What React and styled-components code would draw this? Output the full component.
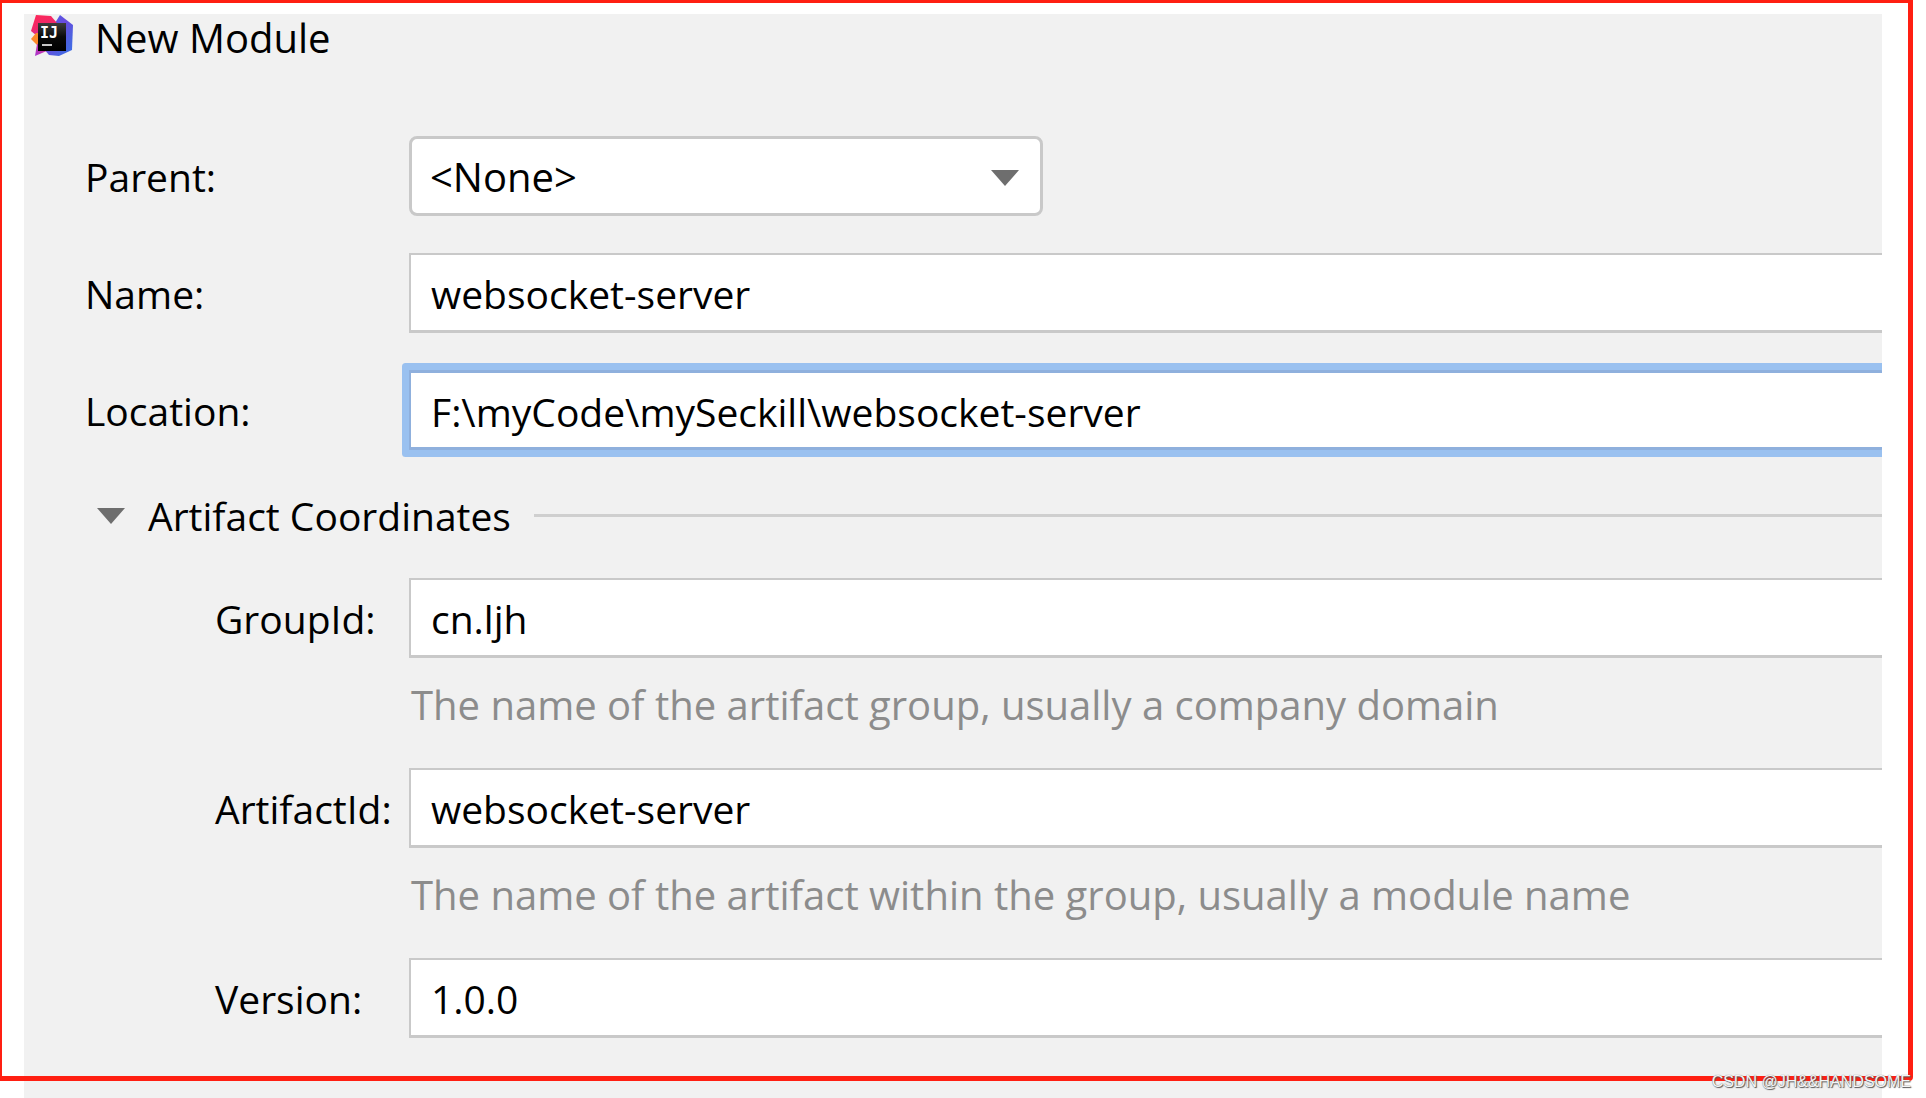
import React, { useState } from 'react'
import styled, { createGlobalStyle, css } from 'styled-components'

const GlobalStyle = createGlobalStyle`
  * {
    box-sizing: border-box;
  }
  body {
    margin: 0;
    background: #fff;
    color: #000;
    font-family: "Open Sans", "Noto Sans", sans-serif;
    font-size: 39px;
    line-height: 54px;
  }
`;

function Logo() {
  return (
    <svg width="42" height="42" viewBox="0 0 42 42" aria-hidden="true">
      <defs>
        <linearGradient id="pink" x1="0" y1="0" x2="0.4" y2="1">
          <stop offset="0" stopColor="#fe2857" />
          <stop offset="0.6" stopColor="#f0276a" />
          <stop offset="1" stopColor="#c22fb0" />
        </linearGradient>
        <linearGradient id="blue" x1="0" y1="0" x2="1" y2="1">
          <stop offset="0" stopColor="#3b70e8" />
          <stop offset="0.45" stopColor="#6b4ade" />
          <stop offset="0.75" stopColor="#4a63e0" />
          <stop offset="1" stopColor="#3a72ea" />
        </linearGradient>
        <linearGradient id="purple" x1="0" y1="1" x2="1" y2="0">
          <stop offset="0" stopColor="#a737d0" />
          <stop offset="1" stopColor="#e0307e" />
        </linearGradient>
        <linearGradient id="black" x1="0" y1="0" x2="0" y2="1">
          <stop offset="0" stopColor="#3c3c3c" />
          <stop offset="0.5" stopColor="#0a0a0a" />
          <stop offset="1" stopColor="#000" />
        </linearGradient>
      </defs>
      <path d="M29 0 42 10 41 35 28 41 18 40 12 33 24 8Z" fill="url(#blue)" />
      <path d="M5 0 20 1 26 8 14 22 6 21 0 16Z" fill="url(#pink)" />
      <path d="M5 18 0 24 6 30 14 28V18Z" fill="#fc8a2a" />
      <path d="M6 29 4 41 18 35 16 26Z" fill="url(#purple)" />
      <rect x="7" y="8" width="28" height="28" fill="url(#black)" />
      <text x="9" y="23" fill="#fff" fontFamily="DejaVu Sans Mono, monospace" fontWeight="700" fontSize="15">IJ</text>
      <rect x="11" y="29" width="10" height="2" fill="#c8c8c8" />
    </svg>
  )
}

function Triangle() {
  return (
    <svg width="28" height="16" viewBox="0 0 28 16" aria-hidden="true">
      <path d="M0 0H28L14 16Z" fill="#6e6e6e" />
    </svg>
  )
}

export default function App() {
  const [open, setOpen] = useState(true)
  const [values, setValues] = useState({
    name: 'websocket-server',
    location: 'F:\\myCode\\mySeckill\\websocket-server',
    groupId: 'cn.ljh',
    artifactId: 'websocket-server',
    version: '1.0.0',
  })

  const bind = (key) => ({
    id: key,
    value: values[key],
    spellCheck: false,
    onChange: (e) => setValues({ ...values, [key]: e.target.value }),
  })

  return (
    <Page>
      <GlobalStyle />
      <Dialog>
        <TitleBar>
          <Logo />
          <Title>New Module</Title>
        </TitleBar>
        <Form>
          <Row>
            <Label htmlFor="parent">Parent:</Label>
            <SelectBox>
              <Select id="parent">
                <option>&lt;None&gt;</option>
              </Select>
              <Arrow><Triangle /></Arrow>
            </SelectBox>
          </Row>
          <Row>
            <Label htmlFor="name">Name:</Label>
            <Input {...bind('name')} />
          </Row>
          <Row>
            <Label htmlFor="location">Location:</Label>
            <Input $active {...bind('location')} />
          </Row>
          <Section type="button" aria-expanded={open} onClick={() => setOpen(!open)}>
            <Triangle />
            Artifact Coordinates
            <Line />
          </Section>
          {open && <>
            <Row>
              <Label $nested htmlFor="groupId">GroupId:</Label>
              <Input {...bind('groupId')} />
              <Hint>The name of the artifact group, usually a company domain</Hint>
            </Row>
            <Row>
              <Label $nested htmlFor="artifactId">ArtifactId:</Label>
              <Input {...bind('artifactId')} />
              <Hint>The name of the artifact within the group, usually a module name</Hint>
            </Row>
            <Row>
              <Label $nested htmlFor="version">Version:</Label>
              <Input {...bind('version')} />
            </Row>
          </>}
        </Form>
      </Dialog>
      <Frame />
      <Watermark>CSDN @JH&amp;&amp;HANDSOME</Watermark>
    </Page>
  )
}

const Page = styled.div`
  position: relative;
  display: flex;
  min-height: 100vh;
  padding: 14px 44px 0 24px;
`;

const Dialog = styled.main`
  flex: 1;
  min-width: 0;
  overflow-x: clip;
  background: #f1f1f1;
`;

const TitleBar = styled.header`
  display: flex;
  gap: 22px;
  padding: 1px 0 0 7px;
`;

const Title = styled.h1`
  margin: 0;
  font-size: 40px;
  font-weight: 400;
  line-height: 45px;
`;

const Form = styled.form`
  display: flex;
  flex-direction: column;
  gap: 37px;
  padding: 76px 0 40px 61px;
`;

const Row = styled.div`
  display: grid;
  grid-template-columns: 324px 1fr;
  align-items: center;
  row-gap: 21px;
`;

const Label = styled.label`
  white-space: nowrap;
  padding-top: 2px;
  padding-left: ${(props) => (props.$nested ? '130px' : '0')};
`;

const control = css`
  width: 100%;
  height: 80px;
  padding: 2px 20px 0;
  border: 3px solid #c9c9c9;
  background: #fff;
  color: inherit;
  font: inherit;
  outline: none;
`;

const Input = styled.input`
  ${control}
  border-width: 2px 0 3px 2px;
  ${(props) => props.$active && css`
    border-color: #8fb0dd;
    border-width: 3px 0 3px 2px;
    box-shadow: 0 0 0 7px #9ac1f0;
    border-radius: 1px;
  `}
`;

const SelectBox = styled.div`
  position: relative;
  max-width: 634px;
`;

const Select = styled.select`
  ${control}
  display: block;
  appearance: none;
  padding-left: 18px;
  border-radius: 8px;
  font-size: 40px;
`;

const Arrow = styled.span`
  position: absolute;
  top: 0;
  right: 24px;
  height: 80px;
  padding-top: 3px;
  display: flex;
  align-items: center;
  pointer-events: none;
`;

const Section = styled.button`
  display: flex;
  align-items: center;
  gap: 23px;
  height: 54px;
  padding: 3px 0 0 12px;
  border: 0;
  background: none;
  color: inherit;
  font: inherit;
  white-space: nowrap;
`;

const Line = styled.span`
  flex: 1;
  height: 3px;
  background: #cfcfcf;
`;

const Hint = styled.p`
  grid-column: 2;
  margin: 0;
  padding-left: 2px;
  color: #8c8c8c;
  font-size: 40px;
  line-height: 52px;
  white-space: nowrap;
`;

const Frame = styled.div`
  position: absolute;
  inset: 0 13px 17px 0;
  border: solid #ff1f12;
  border-width: 3px 5px 5px 2px;
  border-bottom-right-radius: 4px;
  pointer-events: none;
`;

const Watermark = styled.span`
  position: absolute;
  right: 15px;
  bottom: 6px;
  color: #f4f4f4;
  font-family: "Liberation Sans", sans-serif;
  font-size: 16px;
  line-height: 20px;
  text-shadow: 1px 1px 1px #555, 0 0 1px #666;
`;
